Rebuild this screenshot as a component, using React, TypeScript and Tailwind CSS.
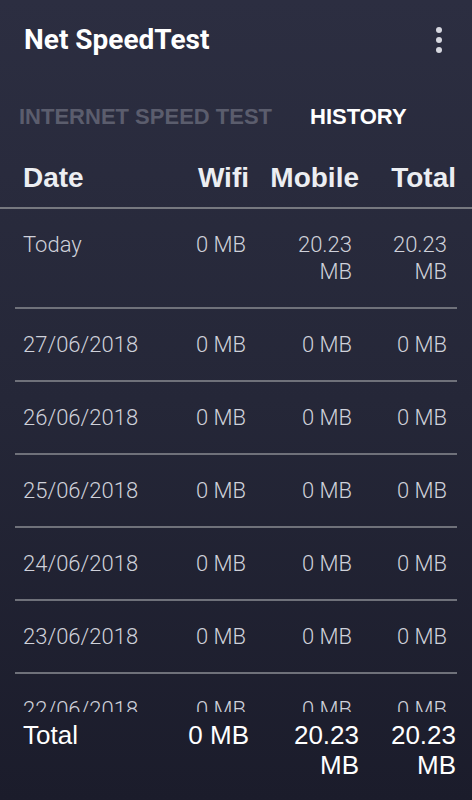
import React from "react";

type Row = {
  date: string;
  wifi: string;
  mobile: string;
  total: string;
};

const rows: Row[] = [
  { date: "Today", wifi: "0 MB", mobile: "20.23 MB", total: "20.23 MB" },
  { date: "27/06/2018", wifi: "0 MB", mobile: "0 MB", total: "0 MB" },
  { date: "26/06/2018", wifi: "0 MB", mobile: "0 MB", total: "0 MB" },
  { date: "25/06/2018", wifi: "0 MB", mobile: "0 MB", total: "0 MB" },
  { date: "24/06/2018", wifi: "0 MB", mobile: "0 MB", total: "0 MB" },
  { date: "23/06/2018", wifi: "0 MB", mobile: "0 MB", total: "0 MB" },
  { date: "22/06/2018", wifi: "0 MB", mobile: "0 MB", total: "0 MB" },
];

const App = () => {
  return (
    <div className="w-[472px] h-[800px] overflow-hidden flex flex-col bg-gradient-to-b from-[#2c2e41] via-[#252738] to-[#1b1c2b] text-white">
      {/* app bar */}
      <div className="h-[80px] shrink-0 flex items-center justify-between pl-[24px] pr-[30px]">
        <h1 className="font-['Roboto'] font-bold text-[28px] leading-[34px] text-white">
          Net SpeedTest
        </h1>
        <div className="flex flex-col gap-[4px] mt-[-1px]">
          <span className="w-[6px] h-[6px] rounded-full bg-[#d6d7df]"></span>
          <span className="w-[6px] h-[6px] rounded-full bg-[#d6d7df]"></span>
          <span className="w-[6px] h-[6px] rounded-full bg-[#d6d7df]"></span>
        </div>
      </div>

      {/* tabs */}
      <div className="h-[74px] shrink-0 flex items-center pl-[19px] font-['Liberation_Sans',Arial,sans-serif] font-bold text-[22px] leading-[26px]">
        <span className="text-[#5b5d6d]">INTERNET SPEED TEST</span>
        <span className="ml-[38px] text-white">HISTORY</span>
      </div>

      {/* header */}
      <div className="shrink-0 flex pl-[23px] pr-[16px] pt-[7px] pb-[12px] border-b-2 border-[#76787f] font-['Liberation_Sans',Arial,sans-serif] font-bold text-[28px] leading-[34px] text-[#eceef2]">
        <div className="flex-1">Date</div>
        <div className="w-[80px] text-right">Wifi</div>
        <div className="w-[100px] ml-[10px] text-right">Mobile</div>
        <div className="w-[88px] ml-[9px] text-right">Total</div>
      </div>

      {/* list */}
      <div className="flex-1 min-h-0 overflow-hidden px-[15px]">
        {rows.map((row, i) => (
          <div
            key={i}
            className="flex pl-[8px] pr-[10px] py-[22px] border-b-2 border-[#6f717a] font-['Roboto'] font-light text-[22px] leading-[27px] text-[#cfd1da]"
          >
            <div className="flex-1">{row.date}</div>
            <div className="w-[80px] text-right">{row.wifi}</div>
            <div className="w-[90px] ml-[16px] text-right">{row.mobile}</div>
            <div className="w-[85px] ml-[10px] text-right">{row.total}</div>
          </div>
        ))}
      </div>

      {/* totals */}
      <div className="h-[88px] shrink-0 flex pl-[23px] pr-[16px] pt-[8px] font-['Liberation_Sans',Arial,sans-serif] text-[26px] leading-[30px] text-white">
        <div className="flex-1">Total</div>
        <div className="w-[80px] text-right">0 MB</div>
        <div className="w-[100px] ml-[10px] text-right">20.23 MB</div>
        <div className="w-[88px] ml-[9px] text-right">20.23 MB</div>
      </div>
    </div>
  );
};

export default App;
